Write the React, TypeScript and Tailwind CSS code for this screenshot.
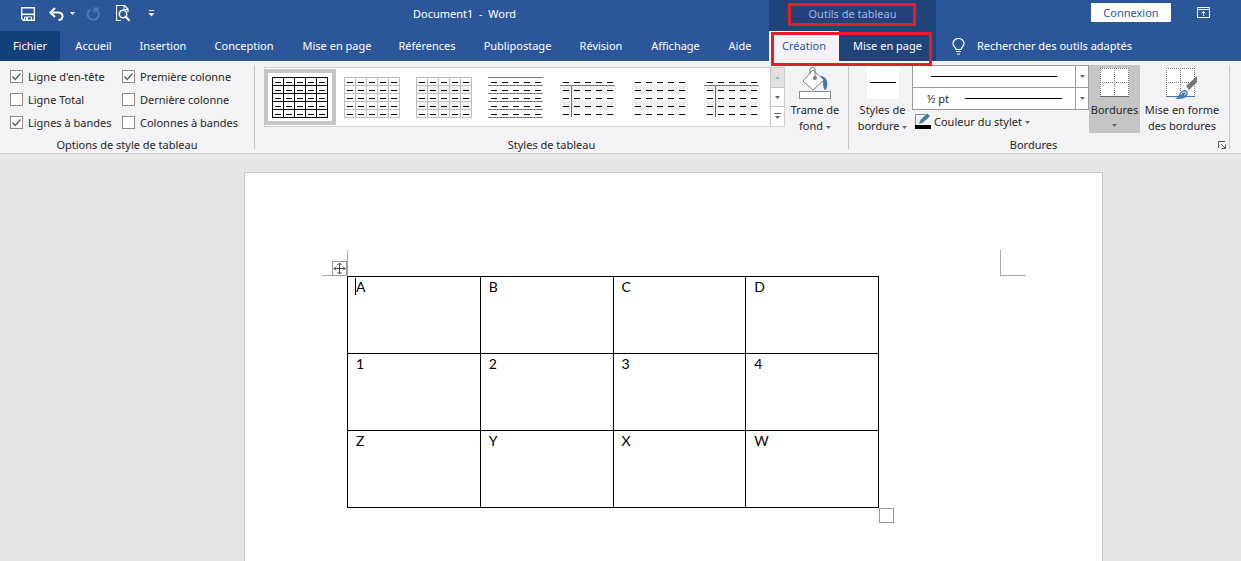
import { useState } from "react";

const tabs = [
  { name: "Accueil", width: "w-[67px]" },
  { name: "Insertion", width: "w-[72px]" },
  { name: "Conception", width: "w-[90px]" },
  { name: "Mise en page", width: "w-[96px]" },
  { name: "Références", width: "w-[84px]" },
  { name: "Publipostage", width: "w-[97px]" },
  { name: "Révision", width: "w-[70px]" },
  { name: "Affichage", width: "w-[79px]" },
  { name: "Aide", width: "w-[50px]" },
];

const options = [
  { label: "Ligne d'en-tête", checked: true },
  { label: "Première colonne", checked: true },
  { label: "Ligne Total", checked: false },
  { label: "Dernière colonne", checked: false },
  { label: "Lignes à bandes", checked: true },
  { label: "Colonnes à bandes", checked: false },
];

const rows = [
  ["A", "B", "C", "D"],
  ["1", "2", "3", "4"],
  ["Z", "Y", "X", "W"],
];

type ThumbProps = {
  grid?: string;
  banded?: boolean;
  lines?: boolean;
  header?: boolean;
  firstColumn?: boolean;
};

const thumbs: (ThumbProps & { name: string })[] = [
  { name: "Grille du tableau", grid: "#000000" },
  { name: "Grille claire", grid: "#bdbdbd" },
  { name: "Tableau simple 1", grid: "#bdbdbd", banded: true },
  { name: "Tableau simple 2", lines: true },
  { name: "Tableau simple 3", banded: true, header: true, firstColumn: true },
  { name: "Tableau simple 4", banded: true },
  { name: "Tableau simple 5", banded: true, header: true, firstColumn: true },
];

function TableThumb({ grid, banded, lines, header, firstColumn }: ThumbProps) {
  const steps = [0, 1, 2, 3, 4, 5];
  const cells = [0, 1, 2, 3, 4];
  return (
    <svg width="56" height="41" viewBox="0 0 56 41" shapeRendering="crispEdges">
      {banded && (
        <g fill="#f0f0f0">
          <rect x="0" y="8" width="56" height="8" />
          <rect x="0" y="24" width="56" height="8" />
        </g>
      )}
      {grid && (
        <g fill={grid}>
          {steps.map((i) => (
            <rect key={"h" + i} x="0" y={i * 8} width="56" height="1" />
          ))}
          {steps.map((i) => (
            <rect key={"v" + i} x={i * 11} y="0" width="1" height="41" />
          ))}
        </g>
      )}
      {lines &&
        steps.map((i) => (
          <rect key={i} x="0" y={i * 8} width="55" height="1" fill="#777" />
        ))}
      {header && <rect x="0" y="8" width="55" height="1" fill="#777" />}
      {firstColumn && <rect x="11" y="8" width="1" height="32" fill="#777" />}
      {cells.map((r) =>
        cells.map((c) => (
          <rect key={r + "-" + c} x={c * 11 + 3} y={r * 8 + 5} width="6" height="1" fill="#000" />
        ))
      )}
    </svg>
  );
}

function Caret({ color = "#666" }: { color?: string }) {
  return (
    <svg width="5" height="3" viewBox="0 0 5 3" className="inline-block align-middle">
      <path d="M0 0h5L2.5 3z" fill={color} />
    </svg>
  );
}

function QuickAccess() {
  return (
    <div className="flex w-[160px] items-center pl-[21px]">
      <button aria-label="Enregistrer" className="mr-[14px]">
        <svg width="14" height="14" viewBox="0 0 14 14" fill="none" stroke="#fff">
          <path d="M.7 .7h12.600v12.600H2.500L.7 11.500z" strokeWidth="1.400" />
          <path d="M1 7.300h12" strokeWidth="1.500" />
          <path d="M3.500 13v-3h7v3" />
          <path d="M6 10.500v3" strokeWidth="2" />
        </svg>
      </button>
      <button aria-label="Annuler" className="mr-[6px]">
        <svg width="15" height="14" viewBox="0 0 15 14" fill="none" stroke="#fff" strokeWidth="2">
          <path d="M6 1L1.500 5.500 6 10" />
          <path d="M2 5.500h7c3 0 4.500 1.500 4.500 3.800S12 13 9.500 13" />
        </svg>
      </button>
      <button aria-label="Options d'annulation" className="mr-[11px] flex">
        <Caret color="#fff" />
      </button>
      <button aria-label="Rétablir" className="mr-4">
        <svg width="14" height="14" viewBox="0 0 14 14" fill="none" stroke="#5078b5" strokeWidth="2">
          <path d="M8.500 5.500V1.500H13" />
          <path d="M4.500 2.500A5.500 5.500 0 1 0 9.500 2.300" />
        </svg>
      </button>
      <button aria-label="Aperçu avant impression" className="mr-[18px]">
        <svg width="14" height="17" viewBox="0 0 14 17" fill="none" stroke="#fff">
          <path d="M5 15.500H.5V.5h8l3.500 3.500v3" strokeWidth="1.200" />
          <path d="M8 .5v4h4" />
          <circle cx="7" cy="9" r="3.700" strokeWidth="1.500" />
          <path d="M9.500 11.500l4 4.300" strokeWidth="2" />
        </svg>
      </button>
      <button aria-label="Personnaliser la barre d'outils">
        <svg width="7" height="7" viewBox="0 0 7 7" fill="#fff">
          <path d="M1 0h5v1H1zM.5 3h6l-3 3.500z" />
        </svg>
      </button>
    </div>
  );
}

function TitleBar() {
  return (
    <div className="flex h-[31px]">
      <div className="flex w-[769px] shrink-0 items-center pb-1">
        <QuickAccess />
        <h1 className="flex-1 text-center whitespace-pre">{"Document1  -  Word"}</h1>
      </div>
      <div className="relative flex w-[167px] shrink-0 items-center justify-center bg-[#204479] pb-1 text-[#9dbbe8]">
        <span>Outils de tableau</span>
        <span className="absolute top-[3px] left-[19px] h-[23px] w-[128px] border-3 border-[#e81c24]" />
      </div>
      <div className="flex flex-1 items-start justify-end gap-[26px] pt-[3px] pr-[31px]">
        <button className="h-[19px] w-20 rounded-[1px] bg-white text-[#2b579a]">
          Connexion
        </button>
        <button aria-label="Options d'affichage du ruban" className="mt-1">
          <svg width="13" height="11" viewBox="0 0 13 11" fill="none" stroke="#fff">
            <path d="M.5 .5h12v10H.5zM.5 2.500h12" />
            <path d="M6.500 9V4.500M4.500 6.500l2-2 2 2" />
          </svg>
        </button>
      </div>
    </div>
  );
}

function TabBar() {
  return (
    <nav className="flex h-[30px] items-stretch">
      <button className="w-[60px] bg-[#124078]">Fichier</button>
      <div className="flex w-[709px] shrink-0">
        {tabs.map((tab) => (
          <button key={tab.name} className={"shrink-0 whitespace-nowrap " + tab.width}>
            {tab.name}
          </button>
        ))}
      </div>
      <div className="relative flex w-[167px] shrink-0 bg-[#204479]">
        <button className="w-[70px] bg-[#f3f2f4] text-[#2b579a]">Création</button>
        <button className="w-[97px] whitespace-nowrap">Mise en page</button>
        <span className="pointer-events-none absolute top-[1px] left-[2px] z-10 h-[34px] w-[161px] border-3 border-[#e81c24]" />
      </div>
      <button className="ml-4 flex items-center gap-3 whitespace-nowrap">
        <svg width="13" height="17" viewBox="0 0 13 17" fill="none" stroke="#fff" strokeWidth="1.200">
          <path d="M4 11.500c0-2-3-3-3-6a5.500 5 0 0 1 11 0c0 3-3 4-3 6z" />
          <path d="M4 13.500h5M5 16h3" />
        </svg>
        <span>Rechercher des outils adaptés</span>
      </button>
    </nav>
  );
}

function StyleOptions() {
  const [state, setState] = useState(options.map((o) => o.checked));
  const toggle = (i: number) => setState(state.map((v, n) => (n === i ? !v : v)));

  return (
    <section className="flex w-[255px] shrink-0 flex-col border-r border-[#c6c6c6]">
      <div className="grid flex-1 grid-cols-[112px_1fr] content-start pl-[10px]">
        {options.map((o, i) => (
          <label key={o.label} className="flex h-[23px] items-center gap-[5px] whitespace-nowrap">
            <span className="relative flex">
              <input
                type="checkbox"
                checked={state[i]}
                onChange={() => toggle(i)}
                className="size-[13px] appearance-none border border-[#8a8a8a] bg-white"
              />
              {state[i] && (
                <svg viewBox="0 0 13 13" className="pointer-events-none absolute inset-0 size-[13px]">
                  <path d="M2.500 6.500l2.700 3L10.500 3.500" fill="none" stroke="#555" strokeWidth="1.200" />
                </svg>
              )}
            </span>
            {o.label}
          </label>
        ))}
      </div>
      <h2 className="text-center leading-2">Options de style de tableau</h2>
    </section>
  );
}

function TableStyles() {
  return (
    <section className="flex w-[594px] shrink-0 flex-col border-r border-[#c6c6c6]">
      <div className="flex flex-1 items-start pl-[9px]">
        <div className="mt-[2px] flex h-[60px] border border-[#d0d0d0] bg-white">
          <div className="-ml-px flex w-[506px] items-center">
            {thumbs.map(({ name, ...style }, i) => (
              <button
                key={name}
                aria-label={name}
                className={
                  "flex h-[56px] w-[72px] shrink-0 items-center justify-center border-4 " +
                  (i === 0 ? "border-[#c6c6c6]" : "border-transparent")
                }
              >
                <TableThumb {...style} />
              </button>
            ))}
          </div>
          <div className="flex w-[14px] flex-col divide-y divide-[#c6c6c6] border-l border-[#c6c6c6]">
            <button aria-label="Ligne précédente" className="flex flex-1 items-center justify-center bg-[#e1e1e1]">
              <svg width="5" height="3" viewBox="0 0 5 3">
                <path d="M0 3h5L2.500 0z" fill="#b0b0b0" />
              </svg>
            </button>
            <button aria-label="Ligne suivante" className="flex flex-1 items-center justify-center">
              <Caret />
            </button>
            <button aria-label="Autres styles" className="flex flex-1 items-center justify-center">
              <svg width="7" height="7" viewBox="0 0 7 7" fill="#666">
                <path d="M0 0h7v1H0zM1 3h5L3.500 6z" />
              </svg>
            </button>
          </div>
        </div>
        <button className="flex w-[60px] flex-col items-center leading-4">
          <svg width="34" height="36" viewBox="0 0 34 36" fill="none" className="mb-[1px]">
            <path d="M23 11c6 1 8 6 5 14-3 0-3-6-3-9z" fill="#4478b0" />
            <path d="M15 5l11 10-11 10L5 16z" fill="#fff" stroke="#7a7a7a" />
            <path d="M12 9V4c0-2 5-2 5 0v8" stroke="#7a7a7a" />
            <circle cx="17" cy="13" r="2" fill="#7a7a7a" />
            <rect x="1.500" y="26.500" width="31" height="7" fill="#fff" stroke="#8a8a8a" />
          </svg>
          <span>Trame de</span>
          <span>
            fond <Caret />
          </span>
        </button>
      </div>
      <h2 className="text-center leading-2">Styles de tableau</h2>
    </section>
  );
}

function LineSelect({ label, value }: { label: string; value: string }) {
  return (
    <div className="relative flex h-[23px] items-center border border-[#9a9a9a] bg-white not-first:-mt-px">
      <select aria-label={label} className="h-full w-full appearance-none pl-[14px]">
        <option>{value}</option>
      </select>
      <span
        className={
          "pointer-events-none absolute h-px bg-black " +
          (value ? "right-[26px] left-[52px]" : "right-[31px] left-[18px]")
        }
      />
      <span className="pointer-events-none absolute inset-y-0 right-0 flex w-[13px] items-center justify-center border-l border-[#9a9a9a]">
        <Caret />
      </span>
    </div>
  );
}

function DottedGrid({ base }: { base: string }) {
  return (
    <g shapeRendering="crispEdges">
      <rect width="29" height="29" fill="#fff" />
      <path
        d="M0 .5h29M0 14.500h29M.5 0v28M14.500 0v28M28.500 0v28"
        fill="none"
        stroke="#777"
        strokeDasharray="1 1"
      />
      <rect y="28" width="29" height="1" fill={base} />
    </g>
  );
}

function Borders() {
  return (
    <section className="flex w-[381px] shrink-0 flex-col border-r border-[#c6c6c6]">
      <div className="flex flex-1 items-start">
        <button className="ml-1 flex w-[59px] shrink-0 flex-col items-center whitespace-nowrap leading-4">
          <svg width="32" height="32" viewBox="0 0 32 32" className="mt-[2px] mb-[3px]">
            <rect width="32" height="32" fill="#fff" />
            <rect x="3" y="15" width="26" height="1" fill="#000" />
          </svg>
          <span>Styles de</span>
          <span>
            bordure <Caret />
          </span>
        </button>
        <div className="w-[177px] shrink-0">
          <LineSelect label="Style de trait" value="" />
          <LineSelect label="Épaisseur du stylet" value="½ pt" />
          <button className="mt-[3px] ml-[3px] flex items-center gap-[3px]">
            <svg width="16" height="17" viewBox="0 0 16 17" fill="none">
              <path d="M.5 12V1.500h10" stroke="#8a8a8a" />
              <path d="M4 11l1.500-4L12 .5l3 2.500-7 6.500z" fill="#4478b0" />
              <rect y="12" width="16" height="4" fill="#000" />
            </svg>
            <span>
              Couleur du stylet <Caret />
            </span>
          </button>
        </div>
        <button className="flex h-[68px] w-[51px] shrink-0 flex-col items-center bg-[#c5c5c5] pt-[3px] leading-4">
          <svg width="29" height="29" viewBox="0 0 29 29" className="mb-[5px] shrink-0">
            <DottedGrid base="#666" />
          </svg>
          <span>Bordures</span>
          <span className="flex h-4 items-center">
            <Caret />
          </span>
        </button>
        <button className="flex w-[84px] shrink-0 flex-col items-center pt-[3px] whitespace-nowrap leading-4">
          <svg width="32" height="32" viewBox="0 0 32 32" fill="none" className="mb-[2px]">
            <DottedGrid base="#4478b0" />
            <path d="M20 18L31 8v6l-8 8z" fill="#777" />
            <path d="M9 31c4-1 4-8 9-9 4 0 5 4 2 7-3 2-7 2-11 2z" fill="#4478b0" />
            <path d="M15 27c0-3 4-4 5-2 0 1-1 2-2 2" stroke="#fff" />
          </svg>
          <span>Mise en forme</span>
          <span>des bordures</span>
        </button>
      </div>
      <div className="flex items-center">
        <h2 className="flex-1 text-center leading-2">Bordures</h2>
        <button aria-label="Bordure et trame" className="mr-[3px]">
          <svg width="8" height="8" viewBox="0 0 8 8" fill="none" stroke="#555">
            <path d="M.5 7V.5H7M3 3l4 4M7.500 3.500v4h-4" />
          </svg>
        </button>
      </div>
    </section>
  );
}

function DocumentPage() {
  return (
    <article className="ml-[244px] flex w-[859px] flex-1 flex-col border border-b-0 border-[#c6c6c8] bg-white pt-[77px] pl-[77px] font-['Lato','Liberation_Sans',sans-serif] text-[14px] leading-5">
      <div className="flex h-[26px] w-[704px] justify-between">
        <div className="relative w-[26px] border-r border-b border-[#ababab]">
          <button
            aria-label="Déplacer le tableau"
            className="absolute right-0 -bottom-px size-[15px] border border-[#9a9a9a] bg-white"
          >
            <svg width="13" height="13" viewBox="0 0 13 13" fill="none" stroke="#444">
              <path d="M6.500 1v11M1 6.500h11M4.500 3l2-2 2 2M4.500 10l2 2 2-2M3 4.500l-2 2 2 2M10 4.500l2 2-2 2" />
            </svg>
          </button>
        </div>
        <div className="w-[26px] border-b border-l border-[#ababab]" />
      </div>
      <table className="ml-[25px] w-[532px] table-fixed border-collapse">
        <tbody>
          {rows.map((row, r) => (
            <tr key={r} className="h-[77px]">
              {row.map((cell, c) => (
                <td key={cell} className="border border-black pl-2 align-top text-black">
                  <span className={r === 0 && c === 0 ? "-ml-px border-l border-black" : ""}>
                    {cell}
                  </span>
                </td>
              ))}
            </tr>
          ))}
        </tbody>
      </table>
      <button
        aria-label="Redimensionner le tableau"
        className="ml-[557px] size-[15px] border border-[#9a9a9a]"
      />
    </article>
  );
}

export default function App() {
  return (
    <div className="flex min-h-screen flex-col overflow-x-hidden bg-[#e6e5e7] font-['Noto_Sans','Open_Sans',sans-serif] text-[11px] leading-4 text-[#262626]">
      <header className="bg-[#2b579a] text-white">
        <TitleBar />
        <TabBar />
      </header>
      <div className="flex h-[93px] border-b border-[#d2d0d2] bg-[#f3f2f4] pt-1 pb-1">
        <StyleOptions />
        <TableStyles />
        <Borders />
      </div>
      <main className="flex flex-1 flex-col pt-[18px]">
        <DocumentPage />
      </main>
    </div>
  );
}
